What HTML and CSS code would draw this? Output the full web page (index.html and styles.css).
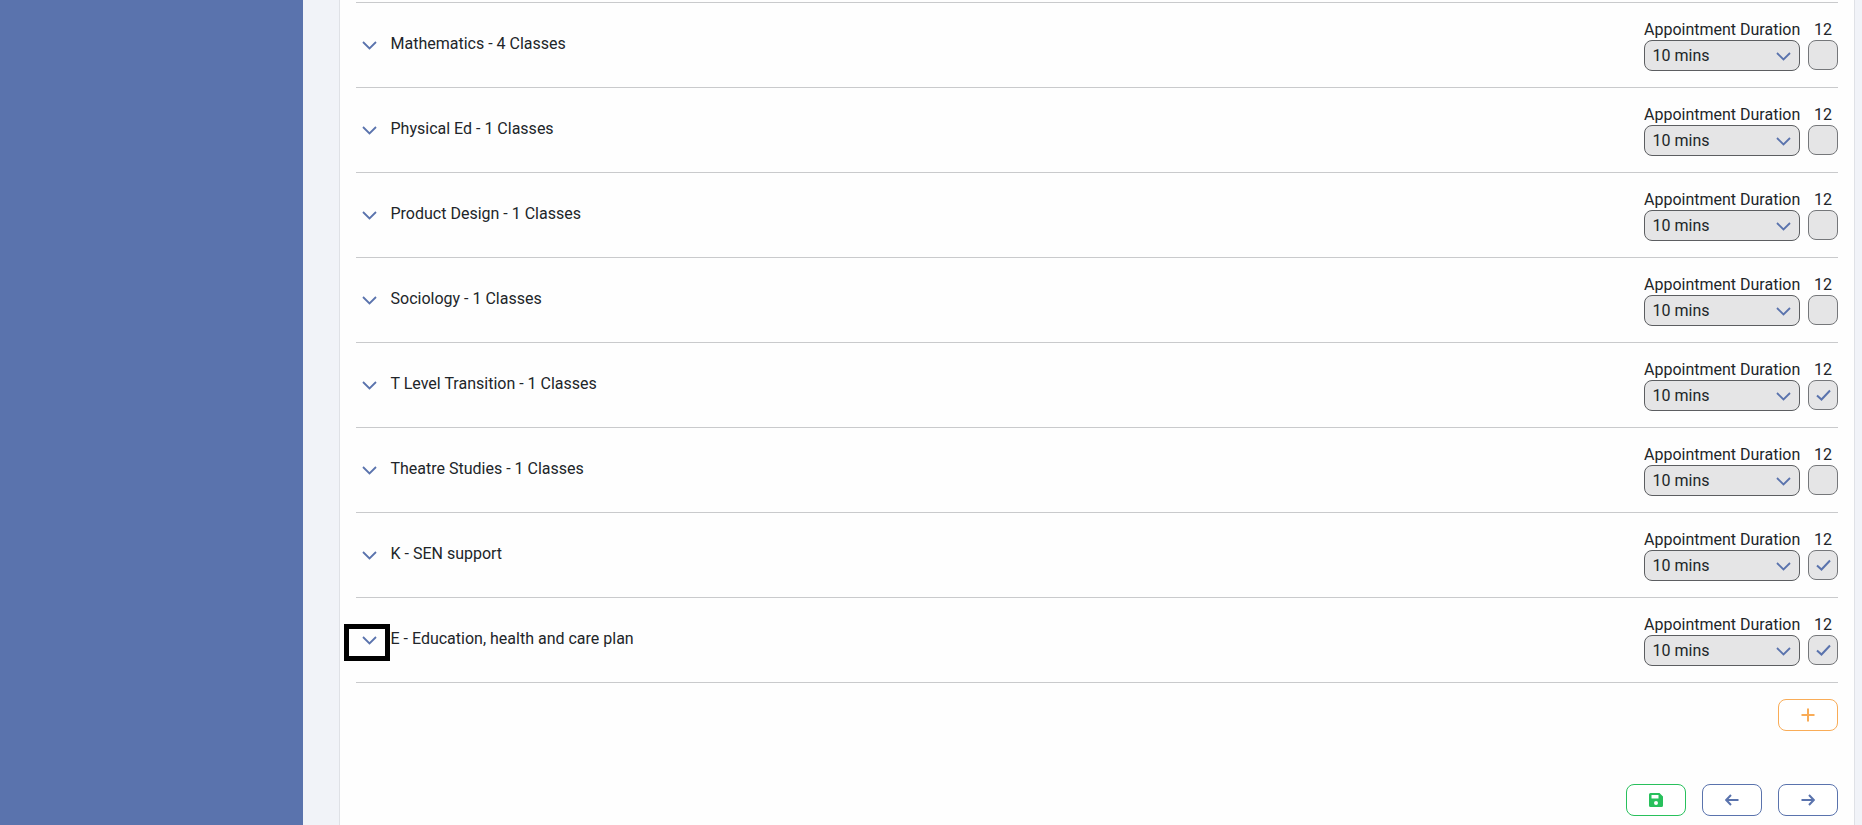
FILE: index.html
```html
<!DOCTYPE html>
<html lang="en">
<head>
	<meta charset="UTF-8">
	<title>Appointment Duration</title>
	<link rel="stylesheet" href="styles.css">
</head>
<body>
	<svg class="icon-defs" width="0" height="0">
		<symbol id="chevron" viewBox="0 0 15 9">
			<path d="M1 1 7.5 7.5 14 1" fill="none" stroke="currentColor" stroke-width="1.8"/>
		</symbol>
	</svg>

	<div class="layout">
		<aside class="sidebar"></aside>
		<main class="content">
			<div class="card">
				<div class="row">
					<button class="toggle"><svg class="chevron"><use href="#chevron"/></svg></button>
					<span class="row-name">Mathematics - 4 Classes</span>
					<div class="row-controls">
						<div class="control-labels"><span>Appointment Duration</span><span class="count">12</span></div>
						<div class="control-inputs">
							<div class="select">10 mins<svg class="chevron"><use href="#chevron"/></svg></div>
							<div class="check"></div>
						</div>
					</div>
				</div>
				<div class="row">
					<button class="toggle"><svg class="chevron"><use href="#chevron"/></svg></button>
					<span class="row-name">Physical Ed - 1 Classes</span>
					<div class="row-controls">
						<div class="control-labels"><span>Appointment Duration</span><span class="count">12</span></div>
						<div class="control-inputs">
							<div class="select">10 mins<svg class="chevron"><use href="#chevron"/></svg></div>
							<div class="check"></div>
						</div>
					</div>
				</div>
				<div class="row">
					<button class="toggle"><svg class="chevron"><use href="#chevron"/></svg></button>
					<span class="row-name">Product Design - 1 Classes</span>
					<div class="row-controls">
						<div class="control-labels"><span>Appointment Duration</span><span class="count">12</span></div>
						<div class="control-inputs">
							<div class="select">10 mins<svg class="chevron"><use href="#chevron"/></svg></div>
							<div class="check"></div>
						</div>
					</div>
				</div>
				<div class="row">
					<button class="toggle"><svg class="chevron"><use href="#chevron"/></svg></button>
					<span class="row-name">Sociology - 1 Classes</span>
					<div class="row-controls">
						<div class="control-labels"><span>Appointment Duration</span><span class="count">12</span></div>
						<div class="control-inputs">
							<div class="select">10 mins<svg class="chevron"><use href="#chevron"/></svg></div>
							<div class="check"></div>
						</div>
					</div>
				</div>
				<div class="row">
					<button class="toggle"><svg class="chevron"><use href="#chevron"/></svg></button>
					<span class="row-name">T Level Transition - 1 Classes</span>
					<div class="row-controls">
						<div class="control-labels"><span>Appointment Duration</span><span class="count">12</span></div>
						<div class="control-inputs">
							<div class="select">10 mins<svg class="chevron"><use href="#chevron"/></svg></div>
							<div class="check"><svg class="tick" viewBox="0 0 15 12"><path d="M1 6.5 5.5 10.5 14 1.5" fill="none" stroke="currentColor" stroke-width="2"/></svg></div>
						</div>
					</div>
				</div>
				<div class="row">
					<button class="toggle"><svg class="chevron"><use href="#chevron"/></svg></button>
					<span class="row-name">Theatre Studies - 1 Classes</span>
					<div class="row-controls">
						<div class="control-labels"><span>Appointment Duration</span><span class="count">12</span></div>
						<div class="control-inputs">
							<div class="select">10 mins<svg class="chevron"><use href="#chevron"/></svg></div>
							<div class="check"></div>
						</div>
					</div>
				</div>
				<div class="row">
					<button class="toggle"><svg class="chevron"><use href="#chevron"/></svg></button>
					<span class="row-name">K - SEN support</span>
					<div class="row-controls">
						<div class="control-labels"><span>Appointment Duration</span><span class="count">12</span></div>
						<div class="control-inputs">
							<div class="select">10 mins<svg class="chevron"><use href="#chevron"/></svg></div>
							<div class="check"><svg class="tick" viewBox="0 0 15 12"><path d="M1 6.5 5.5 10.5 14 1.5" fill="none" stroke="currentColor" stroke-width="2"/></svg></div>
						</div>
					</div>
				</div>
				<div class="row row-last">
					<button class="toggle toggle-focus"><svg class="chevron"><use href="#chevron"/></svg></button>
					<span class="row-name">E - Education, health and care plan</span>
					<div class="row-controls">
						<div class="control-labels"><span>Appointment Duration</span><span class="count">12</span></div>
						<div class="control-inputs">
							<div class="select">10 mins<svg class="chevron"><use href="#chevron"/></svg></div>
							<div class="check"><svg class="tick" viewBox="0 0 15 12"><path d="M1 6.5 5.5 10.5 14 1.5" fill="none" stroke="currentColor" stroke-width="2"/></svg></div>
						</div>
					</div>
				</div>

				<div class="add-line">
					<button class="btn btn-add">
						<svg viewBox="0 0 14 14"><path d="M7 0.5V13.5M0.5 7H13.5" fill="none" stroke="currentColor" stroke-width="2"/></svg>
					</button>
				</div>

				<div class="actions">
					<button class="btn btn-save">
						<svg viewBox="0 0 14 14"><path fill-rule="evenodd" d="M1.5 0H10.5L14 3.5V12.5A1.5 1.5 0 0 1 12.5 14H1.5A1.5 1.5 0 0 1 0 12.5V1.5A1.5 1.5 0 0 1 1.5 0ZM2.5 2V5.5H9.5V2ZM7 8A2 2 0 1 0 7 12 2 2 0 1 0 7 8Z" fill="currentColor"/></svg>
					</button>
					<button class="btn btn-nav">
						<svg viewBox="0 0 14 12"><path d="M6 1 1.2 6 6 11M1.2 6H13.5" fill="none" stroke="currentColor" stroke-width="2"/></svg>
					</button>
					<button class="btn btn-nav">
						<svg viewBox="0 0 14 12"><path d="M8 1 12.8 6 8 11M12.8 6H0.5" fill="none" stroke="currentColor" stroke-width="2"/></svg>
					</button>
				</div>
			</div>
		</main>
	</div>
</body>
</html>
```

FILE: styles.css
```css
html, body {
	margin: 0;
	padding: 0;
	height: 825px;
	overflow: hidden;
}
body {
	font-family: Roboto, "Liberation Sans", sans-serif;
	font-size: 16px;
	color: #212529;
	background-color: #f1f3f8;
}
.icon-defs {
	display: block;
	height: 0;
}
.layout {
	display: flex;
	height: 825px;
}
.sidebar {
	width: 303px;
	flex: none;
	background-color: #5a73ad;
}
.content {
	flex: 1;
	padding: 0 7px 0 36px;
}
.card {
	height: 825px;
	box-sizing: border-box;
	padding: 2px 16px 0;
	background-color: #fefefe;
	border-left: 1px solid #dfe1e6;
	border-right: 1px solid #dfe1e6;
}
.row {
	display: flex;
	align-items: center;
	box-sizing: border-box;
	height: 85px;
	border-top: 1px solid #c9cacc;
}
.row-last {
	height: 86px;
	border-bottom: 1px solid #c9cacc;
}
.toggle {
	width: 36px;
	height: 27px;
	padding: 0 0 5px 5px;
	margin: 5px 5.5px 0 -7px;
	background: none;
	border: 0;
	display: flex;
	align-items: center;
	justify-content: center;
}
.toggle-focus {
	outline: 5px solid #000;
	outline-offset: 0;
}
.chevron {
	width: 15px;
	height: 9px;
	color: #5a73ad;
}
.row-name {
	flex: 1;
	margin-bottom: 4px;
}
.row-controls {
	width: 194px;
}
.control-labels {
	display: flex;
	justify-content: space-between;
	line-height: 19px;
	padding-right: 7px;
}
.count {
	width: 17px;
}
.control-inputs {
	display: flex;
	align-items: flex-start;
	gap: 8px;
	margin-top: 1px;
}
.select {
	width: 139.5px;
	height: 29px;
	padding: 0 8px 0 7.5px;
	display: flex;
	align-items: center;
	justify-content: space-between;
	background-color: #e5e5e6;
	border: 1px solid #5c5e61;
	border-radius: 8px;
}
.select .chevron {
	margin-top: 2px;
}
.check {
	width: 28px;
	height: 28px;
	background-color: #e5e5e6;
	border: 1px solid #75777a;
	border-radius: 8px;
	display: flex;
	align-items: center;
	justify-content: center;
	color: #5a73ad;
}
.tick {
	width: 15px;
	height: 12px;
}
.add-line {
	display: flex;
	justify-content: flex-end;
	margin-top: 16px;
}
.actions {
	display: flex;
	justify-content: flex-end;
	gap: 16px;
	margin-top: 53px;
}
.btn {
	width: 60px;
	height: 32px;
	padding: 0;
	background: #fff;
	border: 1px solid;
	border-radius: 8px;
	display: flex;
	align-items: center;
	justify-content: center;
}
.btn svg {
	width: 14px;
	height: 14px;
}
.btn-add {
	color: #f9ac57;
	border-color: #f9ac57;
}
.btn-save {
	color: #28c05c;
	border-color: #28c05c;
}
.btn-nav {
	color: #5a73ad;
	border-color: #5a73ad;
}
```
